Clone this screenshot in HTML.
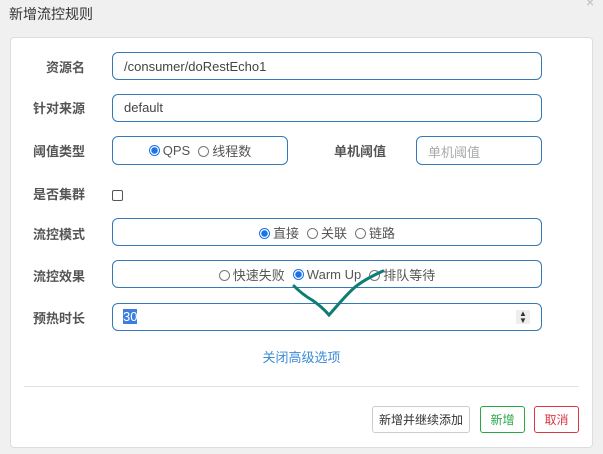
<!DOCTYPE html>
<html><head><meta charset="utf-8"><style>
*{box-sizing:border-box;margin:0;padding:0}
body{width:603px;height:454px;background:#f0f0f0;font-family:"Liberation Sans","Noto Sans CJK SC",sans-serif;font-size:13px;color:#555;position:relative;overflow:hidden}
.a{position:absolute}
.title{left:9px;top:4px;font-size:14px;color:#333}
.card{left:10px;top:37px;width:583px;height:411px;background:#fff;border:1px solid #ddd;border-radius:4px}
.lab{font-weight:bold;color:#555;font-size:13px;width:75px;text-align:right;left:10px}
.box{border:1px solid #337ab7;border-radius:6px;background:#fff}
.rad{display:inline-block;width:11px;height:11px;border:1px solid #777;border-radius:50%;vertical-align:-1px;margin-right:3px;background:#fff}
.rad.on{border-color:#1a73e8;background:radial-gradient(circle,#1a73e8 0 3px,#fff 3.5px)}
.grp{display:flex;justify-content:center;align-items:center;gap:8px;color:#555}
.btn{border-radius:3px;font-size:12px;display:flex;align-items:center;justify-content:center;background:#fff}
</style></head><body>
<div class="a title">新增流控规则</div>
<div class="a" style="left:586px;top:-6px;color:#bbb;font-size:14px">×</div>
<div class="a card"></div>

<div class="a lab" style="top:57px">资源名</div>
<div class="a box" style="left:112px;top:52px;width:430px;height:28px;padding:6px 11px;color:#444">/consumer/doRestEcho1</div>

<div class="a lab" style="top:98px">针对来源</div>
<div class="a box" style="left:112px;top:94px;width:430px;height:28px;padding:5px 11px;color:#444">default</div>

<div class="a lab" style="top:141px">阈值类型</div>
<div class="a box grp" style="left:112px;top:136px;width:176px;height:29px"><span><span class="rad on"></span>QPS</span><span><span class="rad"></span>线程数</span></div>
<div class="a" style="left:334px;top:141px;font-weight:bold">单机阈值</div>
<div class="a box" style="left:416px;top:136px;width:126px;height:29px;padding:5px 11px;color:#aaa">单机阈值</div>

<div class="a lab" style="top:184px">是否集群</div>
<div class="a" style="left:112px;top:190px;width:11px;height:11px;border:1px solid #555;border-radius:2px"></div>

<div class="a lab" style="top:224px">流控模式</div>
<div class="a box grp" style="left:112px;top:218px;width:430px;height:28px"><span><span class="rad on"></span>直接</span><span><span class="rad"></span>关联</span><span><span class="rad"></span>链路</span></div>

<div class="a lab" style="top:266px">流控效果</div>
<div class="a box grp" style="left:112px;top:260px;width:430px;height:28px"><span><span class="rad"></span>快速失败</span><span><span class="rad on"></span>Warm Up</span><span><span class="rad"></span>排队等待</span></div>

<div class="a lab" style="top:308px">预热时长</div>
<div class="a box" style="left:112px;top:303px;width:430px;height:28px"></div>
<div class="a" style="left:123px;top:309px;background:#3b7ee0;color:#fff;line-height:15px">30</div>
<div class="a" style="left:516px;top:310px;width:14px;height:14px;background:#eee;font-size:8px;line-height:7px;text-align:center;color:#333">▲<br>▼</div>

<svg class="a" style="left:0;top:0" width="603" height="454"><path d="M294 286 C300 292 305 296 312 300 C318 304 323 308 329 315 C338 305 345 296 354 288 C362 281 372 276 383 271" fill="none" stroke="#0f7d74" stroke-width="3" stroke-linecap="round"/></svg>

<div class="a" style="left:0;width:603px;top:347px;text-align:center;color:#3b8bd6">关闭高级选项</div>
<div class="a" style="left:24px;top:386px;width:555px;height:1px;background:#e2e2e2"></div>

<div class="a btn" style="left:372px;top:406px;width:98px;height:27px;border:1px solid #ccc;color:#333">新增并继续添加</div>
<div class="a btn" style="left:480px;top:406px;width:45px;height:27px;border:1px solid #28a745;color:#28a745">新增</div>
<div class="a btn" style="left:534px;top:406px;width:45px;height:27px;border:1px solid #dc3545;color:#dc3545">取消</div>
</body></html>
